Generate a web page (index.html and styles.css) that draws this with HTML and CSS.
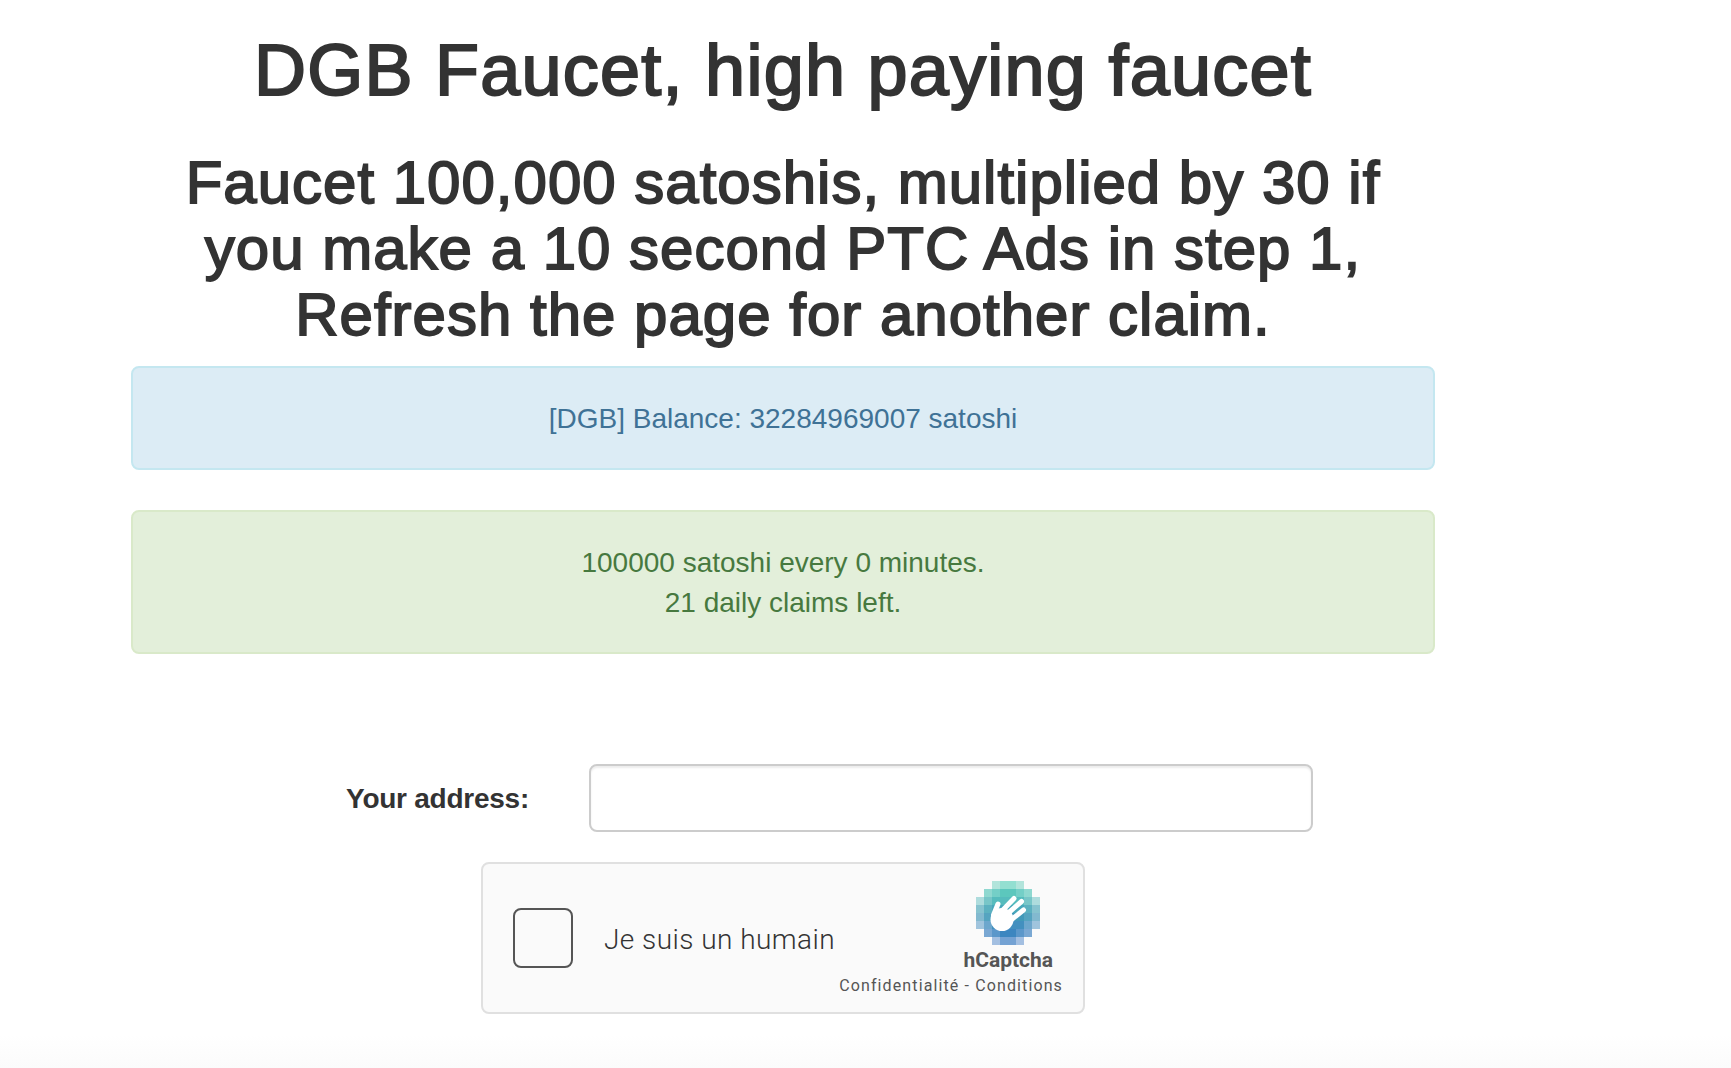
FILE: index.html
```html
<!DOCTYPE html>
<html lang="en">

<head>
    <meta charset="UTF-8">
    <title>DGB Faucet</title>
    <link rel="stylesheet" href="styles.css">
</head>

<body>
    <div class="container">
        <h1>DGB Faucet, high paying faucet</h1>
        <h2>Faucet 100,000 satoshis, multiplied by 30 if<br>you make a 10 second PTC Ads in step 1,<br>Refresh the page for another claim.</h2>

        <div class="alert alert-info">[DGB] Balance: 32284969007 satoshi</div>
        <div class="alert alert-success">100000 satoshi every 0 minutes.<br>21 daily claims left.</div>

        <form class="claim-form">
            <div class="form-row">
                <label for="address">Your address:</label>
                <input id="address" type="text">
            </div>

            <div class="captcha">
                <div class="captcha-check"></div>
                <div class="captcha-text">Je suis un humain</div>
                <div class="captcha-side">
                    <div class="captcha-brand">
                        <svg class="captcha-logo" width="64" height="64" viewBox="0 0 64 64">
                            <!-- row 0 -->
                            <rect x="16" y="0" width="8" height="8" fill="#b2e4db"/>
                            <rect x="24" y="0" width="16" height="8" fill="#93dfd1"/>
                            <rect x="40" y="0" width="8" height="8" fill="#b2e4db"/>
                            <!-- row 1 -->
                            <rect x="8" y="8" width="8" height="8" fill="#8fd8d0"/>
                            <rect x="16" y="8" width="8" height="8" fill="#74cfc7"/>
                            <rect x="24" y="8" width="16" height="8" fill="#5cc7bd"/>
                            <rect x="40" y="8" width="8" height="8" fill="#74cfc7"/>
                            <rect x="48" y="8" width="8" height="8" fill="#8fd8d0"/>
                            <!-- row 2 -->
                            <rect x="0" y="16" width="8" height="8" fill="#aedcdd"/>
                            <rect x="8" y="16" width="8" height="8" fill="#78c6c8"/>
                            <rect x="16" y="16" width="32" height="8" fill="#56bcbd"/>
                            <rect x="48" y="16" width="8" height="8" fill="#78c6c8"/>
                            <rect x="56" y="16" width="8" height="8" fill="#aedcdd"/>
                            <!-- row 3 -->
                            <rect x="0" y="24" width="8" height="8" fill="#87c3cf"/>
                            <rect x="8" y="24" width="8" height="8" fill="#5cb1c0"/>
                            <rect x="16" y="24" width="32" height="8" fill="#48a8bb"/>
                            <rect x="48" y="24" width="8" height="8" fill="#5cb1c0"/>
                            <rect x="56" y="24" width="8" height="8" fill="#87c3cf"/>
                            <!-- row 4 -->
                            <rect x="0" y="32" width="8" height="8" fill="#82b9cf"/>
                            <rect x="8" y="32" width="8" height="8" fill="#55a4c0"/>
                            <rect x="16" y="32" width="32" height="8" fill="#4299b9"/>
                            <rect x="48" y="32" width="8" height="8" fill="#55a4c0"/>
                            <rect x="56" y="32" width="8" height="8" fill="#82b9cf"/>
                            <!-- row 5 -->
                            <rect x="0" y="40" width="8" height="8" fill="#a0c4dd"/>
                            <rect x="8" y="40" width="8" height="8" fill="#6da7cd"/>
                            <rect x="16" y="40" width="32" height="8" fill="#4390bf"/>
                            <rect x="48" y="40" width="8" height="8" fill="#6da7cd"/>
                            <rect x="56" y="40" width="8" height="8" fill="#a0c4dd"/>
                            <!-- row 6 -->
                            <rect x="8" y="48" width="8" height="8" fill="#7aa8d3"/>
                            <rect x="16" y="48" width="8" height="8" fill="#5b97ca"/>
                            <rect x="24" y="48" width="16" height="8" fill="#3c86c0"/>
                            <rect x="40" y="48" width="8" height="8" fill="#5b97ca"/>
                            <rect x="48" y="48" width="8" height="8" fill="#7aa8d3"/>
                            <!-- row 7 -->
                            <rect x="16" y="56" width="8" height="8" fill="#a3bfe1"/>
                            <rect x="24" y="56" width="16" height="8" fill="#74a2d3"/>
                            <rect x="40" y="56" width="8" height="8" fill="#a3bfe1"/>
                            <!-- hand -->
                            <circle cx="26" cy="38.5" r="11.5" fill="#fff"/>
                            <path d="M22 23L17.5 34M38 17.5L25 31M45.5 20.5L30 34M47.5 29L35 39" fill="none" stroke="#fff" stroke-width="5" stroke-linecap="round"/>
                        </svg>
                        <div class="captcha-name">hCaptcha</div>
                    </div>
                    <div class="captcha-links">Confidentialité - Conditions</div>
                </div>
            </div>
        </form>
    </div>
</body>

</html>
```

FILE: styles.css
```css
* {
    box-sizing: border-box;
}

html {
    height: 100%;
}

body {
    margin: 0;
    min-height: 100%;
    background: linear-gradient(#fff 1035px, #fbfbfb 1068px);
    font-family: "Liberation Sans", Arial, sans-serif;
    font-size: 28px;
    line-height: 40px;
    color: #333;
}

.container {
    width: 1304px;
    margin-left: 131px;
    padding-top: 31px;
    text-align: center;
}

h1 {
    margin: 0 0 40px;
    font-size: 72px;
    line-height: 79px;
    font-weight: normal;
    letter-spacing: 1.25px;
    -webkit-text-stroke: 2px #333;
}

h2 {
    margin: 0 0 18px;
    font-size: 60px;
    line-height: 66px;
    font-weight: normal;
    letter-spacing: 1px;
    -webkit-text-stroke: 1.8px #333;
}

.alert {
    padding: 31px 30px 29px;
    margin-bottom: 40px;
    border: 2px solid transparent;
    border-radius: 8px;
}

.alert-info {
    background-color: #dcecf5;
    border-color: #c4e7f0;
    color: #3f7296;
}

.alert-success {
    background-color: #e3efda;
    border-color: #d9e9c9;
    color: #47793f;
}

.claim-form {
    padding-top: 70px;
}

.form-row {
    display: flex;
    align-items: center;
    gap: 60px;
    margin-bottom: 30px;
}

.form-row label {
    width: 398px;
    padding-top: 1px;
    text-align: right;
    font-weight: bold;
    letter-spacing: -.25px;
}

.form-row input {
    width: 724px;
    height: 68px;
    border: 2px solid #ccc;
    border-radius: 8px;
    box-shadow: inset 0 2px 2px rgba(0, 0, 0, .075);
}

.captcha {
    display: flex;
    align-items: center;
    width: 604px;
    height: 152px;
    margin: 0 auto;
    padding: 0 20px 0 30px;
    background-color: #fafafa;
    border: 2px solid #e0e0e0;
    border-radius: 8px;
    text-align: left;
}

.captcha-check {
    width: 60px;
    height: 60px;
    border: 2px solid #555;
    border-radius: 8px;
    background-color: #fafafa;
}

.captcha-text {
    flex: 1;
    margin-left: 31px;
    padding-top: 4px;
    font-family: Roboto, sans-serif;
    font-size: 28px;
    font-weight: 300;
    letter-spacing: .45px;
}

.captcha-side {
    display: flex;
    flex-direction: column;
    align-items: flex-end;
    padding-top: 3px;
}

.captcha-brand {
    display: flex;
    flex-direction: column;
    align-items: center;
    margin-right: 10px;
}

.captcha-logo {
    display: block;
}

.captcha-name {
    margin-top: 1px;
    font-family: Roboto, sans-serif;
    font-size: 21px;
    line-height: 28px;
    font-weight: bold;
    color: #555;
}

.captcha-links {
    font-family: Roboto, sans-serif;
    font-size: 16px;
    line-height: 24px;
    letter-spacing: 1.12px;
    color: #555;
    white-space: nowrap;
}
```
